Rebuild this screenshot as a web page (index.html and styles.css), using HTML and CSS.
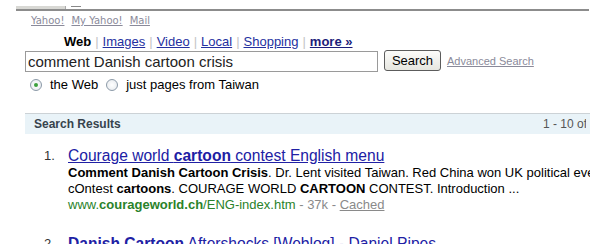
FILE: index.html
```html
<!DOCTYPE html>
<html lang="en">
<head>
    <meta charset="UTF-8">
    <meta name="viewport" content="width=device-width, initial-scale=1.0">
    <title>Yahoo! Search Results</title>
    <link rel="stylesheet" href="styles.css">
</head>
<body>

    <div class="chrome">
        <div class="tab"></div>
        <div class="tick"></div>
    </div>
    <div class="rule"></div>

    <div class="util">
        <a href="#">Yahoo!</a>
        <a href="#">My Yahoo!</a>
        <a href="#">Mail</a>
    </div>

    <div class="verticals">
        <b>Web</b><span class="sep">|</span><a href="#">Images</a><span class="sep">|</span><a href="#">Video</a><span class="sep">|</span><a href="#">Local</a><span class="sep">|</span><a href="#">Shopping</a><span class="sep">|</span><a href="#" class="more">more &raquo;</a>
    </div>

    <div class="search-row">
        <div class="query">comment Danish cartoon crisis</div>
        <button class="btn">Search</button>
        <a href="#" class="adv">Advanced Search</a>
    </div>

    <div class="scope">
        <span class="radio checked"></span><span class="label">the Web</span>
        <span class="radio"></span><span class="label">just pages from Taiwan</span>
    </div>

    <div class="results">
        <div class="results-head">
            <span class="heading">Search Results</span>
            <span class="count">1 - 10 of about 1,230,000</span>
        </div>

        <div class="result">
            <span class="num">1.</span>
            <div class="body">
                <a href="#" class="title">Courage world <b>cartoon</b> contest English menu</a>
                <div class="snippet"><b>Comment Danish Cartoon Crisis</b>. Dr. Lent visited Taiwan. Red China won UK political event</div>
                <div class="snippet">cOntest <b>cartoons</b>. COURAGE WORLD <b>CARTOON</b> CONTEST. Introduction ...</div>
                <div class="meta"><span class="url">www.<b>courageworld.ch</b>/ENG-index.htm</span> - 37k - <a href="#">Cached</a></div>
            </div>
        </div>

        <div class="result second">
            <span class="num">2.</span>
            <div class="body">
                <a href="#" class="title"><b>Danish Cartoon</b> Aftershocks [Weblog] - Daniel Pipes</a>
            </div>
        </div>
    </div>

</body>
</html>
```

FILE: styles.css
```css
body {
    margin: 0;
    font-family: "Liberation Sans", Arial, sans-serif;
    background: #fff;
    color: #000;
    overflow: hidden;
}
a {
    color: #2323a3;
}

.chrome {
    display: flex;
    align-items: flex-end;
    height: 9px;
    margin-left: 16px;
}
.tab {
    width: 49px;
    height: 3px;
    background: #d8d8d4;
    border-right: 1px solid #aaa;
}
.tick {
    width: 10px;
    height: 1px;
    margin: 0 0 2px 5px;
    background: #888;
}
.rule {
    height: 2px;
    margin: 0 17px 0 16px;
    background: #8c8c8c;
}

.util {
    margin: 4px 0 0 31px;
    font-family: "DejaVu Sans", Verdana, sans-serif;
    font-size: 10px;
    line-height: 12px;
    display: flex;
    gap: 7px;
}
.util a {
    color: #8a8a9a;
}

.verticals {
    margin: 7px 0 0 64px;
    font-size: 13px;
    line-height: 16px;
}
.verticals a {
    color: #2430a0;
}
.verticals .sep {
    color: #c4c4c4;
    margin: 0 4px;
}
.verticals .more {
    font-weight: bold;
    color: #1c1c7a;
}

.search-row {
    display: flex;
    align-items: center;
    margin: 0 0 0 25px;
    height: 22px;
}
.query {
    width: 349px;
    height: 19px;
    border: 1px solid #9a9a9a;
    padding-left: 2px;
    font-size: 15px;
    line-height: 19px;
    color: #222;
    margin-top: 1px;
}
.btn {
    margin-left: 6px;
    width: 57px;
    height: 21px;
    padding: 0;
    font-family: "Liberation Sans", Arial, sans-serif;
    font-size: 13px;
    color: #000;
    border: 1px solid #5c5c5c;
    border-radius: 3px;
    background: linear-gradient(#fcfcfa, #e6e6e0);
    margin-top: -1px;
}
.adv {
    margin-left: 6px;
    font-size: 11px;
    color: #8a8a9a;
}

.scope {
    display: flex;
    align-items: center;
    margin: 5px 0 0 30px;
    font-size: 13px;
    line-height: 16px;
}
.radio {
    width: 10px;
    height: 10px;
    border: 1px solid #8c9aa8;
    border-radius: 50%;
    background: radial-gradient(#fff, #e4e8ec);
    position: relative;
    margin-right: 8px;
}
.radio.checked::after {
    content: "";
    position: absolute;
    left: 3px;
    top: 3px;
    width: 4px;
    height: 4px;
    border-radius: 50%;
    background: #3ca03c;
}
.label {
    margin-right: 8px;
}

.results {
    margin: 20px 16px 0 25px;
    overflow: hidden;
}
.results-head {
    display: flex;
    align-items: center;
    height: 20px;
    border-top: 1px solid #ccd2d6;
    background: #e9f3f8;
    padding-left: 9px;
    white-space: nowrap;
}
.heading {
    flex: 1;
    font-size: 12px;
    font-weight: bold;
    color: #37434d;
}
.count {
    width: 43px;
    margin-right: 4px;
    flex-shrink: 0;
    overflow: hidden;
    font-size: 12px;
    color: #555;
}

.result {
    display: flex;
    margin-top: 13px;
    white-space: nowrap;
}
.result.second {
    margin-top: 22px;
}
.num {
    flex-shrink: 0;
    width: 24px;
    margin-left: 19px;
    font-size: 13px;
    line-height: 18px;
    color: #333;
}
.title {
    display: block;
    font-size: 15.6px;
    line-height: 18px;
    color: #2020a4;
}
.snippet,
.meta {
    font-size: 13px;
    line-height: 16px;
}
.meta {
    color: #8a8a8a;
}
.meta .url {
    color: #2a822a;
}
.meta a {
    color: #8a8a8a;
}
```
